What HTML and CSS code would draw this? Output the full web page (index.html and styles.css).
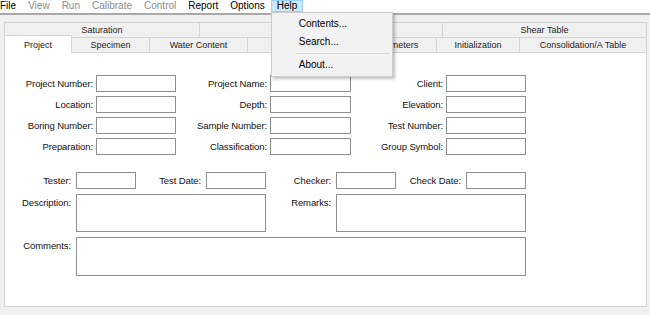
FILE: index.html
```html
<!DOCTYPE html>
<html>
<head>
<meta name="viewport" content="width=device-width, initial-scale=1">
<link rel="stylesheet" href="styles.css">
</head>
<body>

  <!-- Menu bar -->
  <div class="menubar">
    <span class="menu-item">File</span>
    <span class="menu-item disabled">View</span>
    <span class="menu-item disabled">Run</span>
    <span class="menu-item disabled">Calibrate</span>
    <span class="menu-item disabled">Control</span>
    <span class="menu-item">Report</span>
    <span class="menu-item">Options</span>
    <span class="menu-item open">Help
      <div class="dropdown">
        <div class="dropdown-item">Contents...</div>
        <div class="dropdown-item">Search...</div>
        <div class="separator"></div>
        <div class="dropdown-item">About...</div>
      </div>
    </span>
  </div>

  <!-- Tab control (two tabs sit under the open menu) -->
  <div class="tabcontrol">
    <div class="tab-row back">
      <div class="tab">Saturation</div>
      <div class="tab"></div>
      <div class="tab">Shear Table</div>
    </div>
    <div class="tab-row front">
      <div class="tab active">Project</div>
      <div class="tab">Specimen</div>
      <div class="tab">Water Content</div>
      <div class="tab"></div>
      <div class="tab"><span class="clipped">meters</span></div>
      <div class="tab">Initialization</div>
      <div class="tab">Consolidation/A Table</div>
    </div>

    <div class="panel">
      <div class="fields">
        <label class="label">Project Number:</label>
        <input type="text" class="box">
        <label class="label">Project Name:</label>
        <input type="text" class="box">
        <label class="label">Client:</label>
        <input type="text" class="box">

        <label class="label">Location:</label>
        <input type="text" class="box">
        <label class="label">Depth:</label>
        <input type="text" class="box">
        <label class="label">Elevation:</label>
        <input type="text" class="box">

        <label class="label">Boring Number:</label>
        <input type="text" class="box">
        <label class="label">Sample Number:</label>
        <input type="text" class="box">
        <label class="label">Test Number:</label>
        <input type="text" class="box">

        <label class="label">Preparation:</label>
        <input type="text" class="box">
        <label class="label">Classification:</label>
        <input type="text" class="box">
        <label class="label">Group Symbol:</label>
        <input type="text" class="box">
      </div>

      <div class="notes">
        <label class="label">Tester:</label>
        <input type="text" class="box">
        <label class="label">Test Date:</label>
        <input type="text" class="box">
        <label class="label">Checker:</label>
        <input type="text" class="box">
        <label class="label">Check Date:</label>
        <input type="text" class="box">

        <label class="label top">Description:</label>
        <textarea class="box wide"></textarea>
        <label class="label top">Remarks:</label>
        <textarea class="box wide"></textarea>

        <label class="label top">Comments:</label>
        <textarea class="box full"></textarea>
      </div>
    </div>
  </div>

</body>
</html>
```

FILE: styles.css
```css
* {box-sizing: border-box}

body {
  margin: 0;
  background-color: #f0f0f0;
  font-family: "Liberation Sans", Arial, sans-serif;
  color: #111;
}

/* Menu bar */
.menubar {
  display: flex;
  height: 15px;
  background-color: #fff;
  border-bottom: 2px solid #a8a8a8;
  font-size: 10px;
  position: relative;
  z-index: 5;
}

.menu-item {
  position: relative;
  height: 12px;
  line-height: 11px;
  padding: 0 6px;
  color: #000;
  cursor: default;
}

.menu-item:first-child {
  padding-left: 0;
}

.menu-item.disabled {
  color: #8c8c8c;
}

/* the menu that is open */
.menu-item.open {
  background-color: #cce8ff;
  box-shadow: inset 0 0 0 1px #99d1ff;
}

.dropdown {
  position: absolute;
  top: 12px;
  left: 0;
  width: 122px;
  padding: 2px 0;
  background-color: #f2f2f2;
  border: 1px solid #cccccc;
  box-shadow: 2px 2px 3px rgba(0, 0, 0, 0.25);
}

.dropdown-item {
  height: 18px;
  line-height: 18px;
  padding-left: 27px;
  white-space: nowrap;
}

.separator {
  height: 1px;
  margin: 2px 2px 2px 24px;
  background-color: #d7d7d7;
}

/* Tabs */
.tabcontrol {
  margin: 7px 3px 0 4px;
}

.tab-row {
  display: grid;
  height: 15px;
}

.tab-row.back {
  grid-template-columns: 196px 243px 1fr;
}

.tab-row.front {
  grid-template-columns: 68px 78px 98px 99px 90px 83px 1fr;
}

.tab {
  display: flex;
  align-items: center;
  justify-content: center;
  background-color: #f0f0f0;
  border-top: 1px solid #d4d4d4;
  border-right: 1px solid #d4d4d4;
  font-size: 9px;
  color: #222;
  white-space: nowrap;
  overflow: hidden;
}

.tab:first-child {
  border-left: 1px solid #d4d4d4;
}

/* label whose start is hidden under the menu */
.tab .clipped {
  margin-left: 26px;
}

.tab.active {
  position: relative;
  z-index: 1;
  margin-top: -2px;
  margin-bottom: -1px;
  background-color: #fff;
}

/* Tab page */
.panel {
  height: 255px;
  padding-top: 22px;
  background-color: #fff;
  border: 1px solid #d4d4d4;
}

.label {
  text-align: right;
  padding-right: 3px;
  font-size: 9.5px;
  letter-spacing: -0.1px;
  white-space: nowrap;
}

.box {
  display: block;
  width: 100%;
  height: 100%;
  margin: 0;
  padding: 0 2px;
  border: 1px solid #8f8f8f;
  border-radius: 0;
  background-color: #fff;
  font-family: inherit;
  font-size: 10px;
  resize: none;
  outline: none;
}

.fields {
  display: grid;
  grid-template-columns: 91px 80px 94px 81px 95px 80px;
  grid-auto-rows: 17px;
  row-gap: 4px;
  align-items: center;
}

.notes {
  display: grid;
  grid-template-columns: 71px 60px 70px 60px 70px 60px 70px 60px;
  grid-template-rows: 17px 38px 39px;
  row-gap: 5px;
  margin-top: 17px;
  align-items: center;
}

.notes .label {
  padding-right: 5px;
}

.label.top {
  align-self: start;
  padding-top: 3px;
}

.wide {
  grid-column: span 3;
}

.full {
  grid-column: span 7;
}
```
